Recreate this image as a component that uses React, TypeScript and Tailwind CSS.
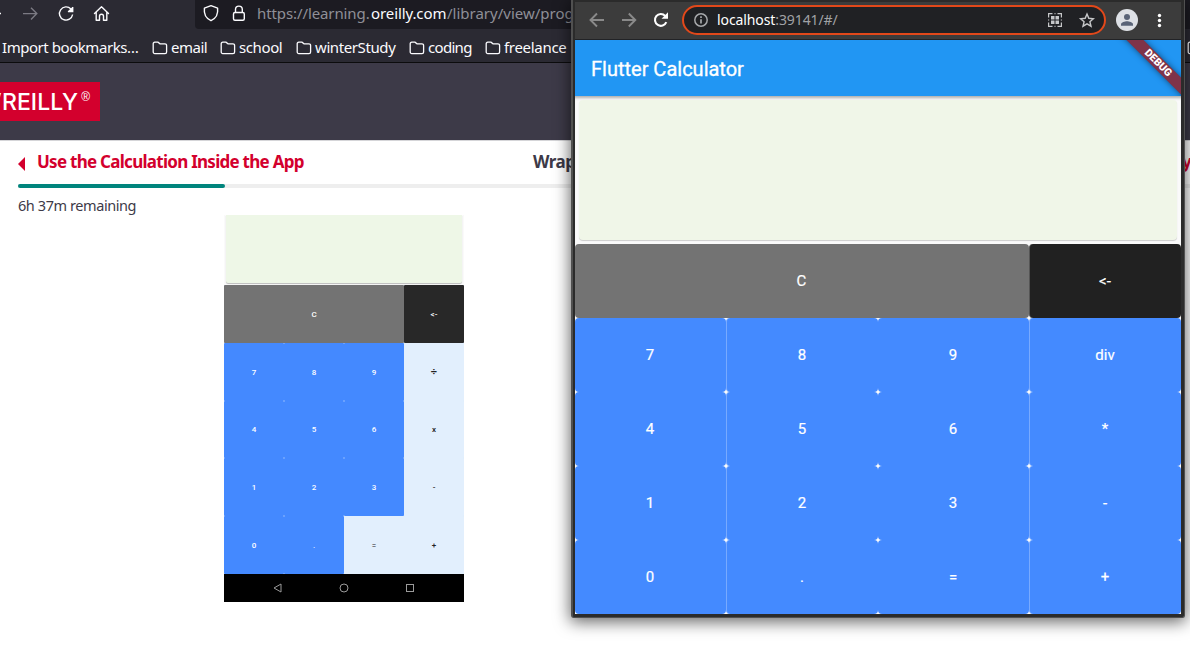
import React from "react";

type IconProps = { className?: string };

const Folder = ({ className = "" }: IconProps) => (
  <svg viewBox="0 0 16 14" className={`h-[14px] w-4 shrink-0 ${className}`} fill="none" stroke="#fbfbfe" strokeWidth="1.3">
    <path d="M1.2 3V11a1.6 1.6 0 0 0 1.6 1.6H13a1.6 1.6 0 0 0 1.6-1.6V4.4A1.6 1.6 0 0 0 13 2.8H8L6 1.2H2.8A1.6 1.6 0 0 0 1.2 3Z" />
  </svg>
);

const bookmarks = [
  { name: "email", box: "w-[68px]", text: "tracking-[-0.5px]" },
  { name: "school", box: "w-[76px]", text: "tracking-[-0.4px]" },
  { name: "winterStudy", box: "w-[113px]", text: "tracking-[-0.4px]" },
  { name: "coding", box: "w-[76px]", text: "tracking-[-0.7px]" },
  { name: "freelance", box: "w-[85px]", text: "tracking-[-0.3px]" },
];

function FirefoxChrome() {
  return (
    <div className="h-[63px] border-b border-[#0c0c0d] bg-[#2b2a33] text-[#fbfbfe]">
      <div className="flex h-[29px]">
        <svg width="195" height="29" viewBox="0 0 195 29" fill="none" stroke="#fbfbfe" strokeWidth="1.4" className="shrink-0">
          <path d="M0 13.5h1" />
          <g stroke="#7b7a83">
            <path d="M23 13.6h13.4M31 7.8l5.8 5.8-5.8 5.8" />
          </g>
          <path d="M72.6 14.5a6.6 6.6 0 1 1-1.7-5.5M72.7 7v4.6H68" />
          <path d="M67.5 11.6h5.2V6.8Z" fill="#fbfbfe" stroke="none" />
          <path d="M94.5 13.4l7-6.6 7 6.6M96.2 12v8.2h3.3v-4a2 2 0 0 1 4 0v4h3.3V12" strokeLinejoin="round" strokeLinecap="round" />
        </svg>
        <div className="flex flex-1 items-start rounded-bl bg-[#1c1b22]">
          <svg width="62" height="29" viewBox="195 0 62 29" fill="none" stroke="#fbfbfe" strokeWidth="1.4" className="shrink-0">
            <path d="M211 5.7l6.6 2.5c.7 6-1.5 10.300-6.6 12.500-5.100-2.200-7.300-6.500-6.600-12.500Z" strokeLinejoin="round" />
            <rect x="233.500" y="12.500" width="10.800" height="7.800" rx="1.500" />
            <path d="M235.500 12.500v-3a3.400 3.400 0 0 1 6.800 0v3" />
          </svg>
          <div className="mt-[3px] flex text-[15px] leading-[21px] whitespace-nowrap text-[#8f8f97]">
            <span className="w-[114px] tracking-[-0.1px]">https://learning.</span>
            <span className="w-[76px] tracking-[-0.1px] text-[#fbfbfe]">oreilly.com</span>
            <span>/library/view/programming</span>
          </div>
        </div>
      </div>
      <div className="flex h-[33px] pt-[8px] pl-[2px] text-[15px] leading-[21px] whitespace-nowrap">
        <span className="w-[150px] shrink-0 tracking-[-0.45px]">Import bookmarks…</span>
        {bookmarks.map((b) => (
          <div key={b.name} className={`flex shrink-0 ${b.box}`}>
            <Folder className="mt-1" />
            <span className={`ml-[3px] ${b.text}`}>{b.name}</span>
          </div>
        ))}
        <Folder className="mt-1 ml-[617px]" />
      </div>
    </div>
  );
}

function MiniKey({ label, tone = "blue", wide = false }: { label: string; tone?: string; wide?: boolean }) {
  const tones: Record<string, string> = {
    blue: "bg-[#4489ff] text-white",
    pale: "bg-[#e2effd] text-[#222]",
    gray: "bg-[#737373] text-white",
    black: "bg-[#282828] text-white",
  };
  return (
    <div className={`flex items-center justify-center rounded-[1px] pt-[2px] font-medium ${label === "÷" ? "text-[11px]" : "text-[8px]"} ${tones[tone]} ${wide ? "col-span-3" : ""}`}>
      {label}
    </div>
  );
}

function MiniCalculator() {
  const rows = [
    ["7", "8", "9", "÷"],
    ["4", "5", "6", "x"],
    ["1", "2", "3", "-"],
    ["0", ".", "=", "+"],
  ];
  return (
    <div className="ml-[224px] w-[240px] bg-[#fafafa] font-['Roboto',sans-serif]">
      <div className="h-[70px] px-[2px]">
        <div className="h-[68px] rounded-b-[2px] bg-[#eef7e7] shadow-[0_1px_1px_rgba(0,0,0,0.25)]" />
      </div>
      <div className="grid h-[289px] grid-cols-4 grid-rows-5 bg-[#dcebfc]">
        <MiniKey label="C" tone="gray" wide />
        <MiniKey label="<-" tone="black" />
        {rows.flat().map((k) => (
          <MiniKey key={k} label={k} tone={"÷x-=+".includes(k) ? "pale" : "blue"} />
        ))}
      </div>
      <svg width="240" height="28" viewBox="0 0 240 28" className="block bg-black" fill="none" stroke="#9b9b9b">
        <path d="M57 10v8l-7-4Z" />
        <circle cx="120" cy="14" r="4" />
        <rect x="182.500" y="10.500" width="7" height="7" />
      </svg>
    </div>
  );
}

function Reader() {
  return (
    <div>
      <header className="flex h-[77px] bg-[#3d3a48] pt-[19px]">
        <div className="flex h-[39px] w-[100px] justify-end overflow-hidden bg-[#d3002d] pr-[10px] text-white">
          <span className="mr-[3px] font-['Inter',sans-serif] text-[23px] leading-[40px] font-medium tracking-[0.050px] whitespace-nowrap">’REILLY</span>
          <span className="mt-[6px] font-['Liberation_Sans',sans-serif] text-[12px] leading-[18px]">®</span>
        </div>
      </header>
      <div className="h-[75px] border-t border-[#d5d5d8]">
        <div className="flex h-[43px] pt-[9px] pl-[18px] text-[17px] leading-[24px] font-bold whitespace-nowrap">
          <svg width="7" height="14" viewBox="0 0 7 14" className="mt-[7px] mr-3 shrink-0">
            <path d="M7 0v14L0 7Z" fill="#d3002d" />
          </svg>
          <span className="w-[496px] shrink-0 tracking-[-0.73px] text-[#d3002d]">Use the Calculation Inside the App</span>
          <span className="w-[600px] shrink-0 tracking-[-0.5px] text-[#3d3a48]">Wrap Up</span>
          <span className="ml-[49px] text-[#d3002d]">y</span>
        </div>
        <div className="ml-[18px] h-1 bg-[#eee]">
          <div className="h-1 w-[207px] rounded-full bg-[#00857d]" />
        </div>
        <div className="mt-[7px] ml-[18px] text-[14.5px] leading-[21px] tracking-[-0.42px] text-[#3d3a48]">6h 37m remaining</div>
      </div>
      <MiniCalculator />
    </div>
  );
}

function AddressBar() {
  return (
    <div className="flex h-[40px] border-t-2 border-b border-t-[#2b2b2b] border-b-[#222326] bg-[#3c3c3c] text-[#fff]">
      <svg width="107" height="37" viewBox="575 2 107 37" fill="none" strokeWidth="1.900" className="shrink-0">
        <path d="M604 20h-13M597 13.500L590.500 20l6.500 6.500M622 20h13M628.800 13.500l6.500 6.500-6.500 6.500" stroke="#8a8a8a" />
        <path d="M666.300 22.200a5.900 5.900 0 1 1-1.100-6.300" stroke="#fff" strokeWidth="2.100" />
        <path d="M661.500 18.700h6.500v-6.400Z" fill="#fff" />
      </svg>
      <div className="mt-[3px] flex h-[30px] w-[424px] shrink-0 items-center rounded-full border-2 border-[#e2481a] bg-[#202124] pl-2.5">
        <svg width="14" height="14" viewBox="0 0 14 14" fill="none" stroke="#a6a8ab" strokeWidth="1.500">
          <circle cx="7" cy="7" r="6.200" />
          <path d="M7 6.200v4.300M7 3.200v1.700" strokeWidth="1.700" />
        </svg>
        <span className="ml-[9px] text-[14px] leading-5 tracking-[-0.100px] text-[#a0a2a5]">
          <span className="text-white">localhost</span>:39141/#/
        </span>
        <svg width="48" height="16" viewBox="0 0 48 16" className="mr-[9px] ml-auto">
          <g fill="none" stroke="#c6c7c9" strokeWidth="1.200">
            <path d="M1.600 5.500V1.600H5.500M8.500 1.600h-1M10.500 1.600h3.900V5.500M14.400 7.500v1M14.400 10.500v3.900H10.500M8.500 14.400h-1M5.500 14.400H1.600V10.500M1.600 8.500v-1" />
          </g>
          <path d="M4 4h3.500v3.500H4zM8.500 4H12v3.500H8.500zM4 8.500h3.500V12H4zM8.500 8.500H12V12H8.500z" fill="#c6c7c9" />
          <path d="M40 2l1.800 4.300 4.600.4-3.500 3 1.100 4.500-4-2.400-4 2.400 1.100-4.500-3.500-3 4.600-.4Z" fill="none" stroke="#c6c7c9" strokeWidth="1.400" />
        </svg>
      </div>
      <svg width="75" height="37" viewBox="1106 2 75 37" className="shrink-0">
        <circle cx="1127" cy="20" r="11" fill="#dee1e6" />
        <circle cx="1127" cy="17" r="3" fill="#5a6478" />
        <path d="M1121 25.800v-1.600c0-2 4-3 6-3s6 1 6 3v1.600Z" fill="#5a6478" />
        <g fill="#fff">
          <circle cx="1159.500" cy="15.500" r="1.700" />
          <circle cx="1159.500" cy="20.500" r="1.700" />
          <circle cx="1159.500" cy="25.500" r="1.700" />
        </g>
      </svg>
    </div>
  );
}

function Key({ label, className = "bg-[#448aff]" }: { label: string; className?: string }) {
  return (
    <div className={`flex items-center justify-center rounded pr-px text-[15px] font-normal text-white [-webkit-text-stroke:0.2px_white] ${className}`}>
      {label}
    </div>
  );
}

const keys = ["7", "8", "9", "div", "4", "5", "6", "*", "1", "2", "3", "-", "0", ".", "=", "+"];

function CalculatorWindow() {
  return (
    <div className="absolute top-0 left-[571px] h-[618px] w-[614px] rounded-b-[3px] border-r border-b border-l-2 border-[#505050] bg-[#2b2b2b] shadow-[0_3px_16px_1px_rgba(0,0,0,0.600)]">
      <div className="ml-[2px] w-[606px]">
        <AddressBar />
        <div className="flex h-[574px] flex-col overflow-hidden bg-[#fafafa] font-['Roboto',sans-serif]">
          <div className="relative z-10 flex h-14 shrink-0 items-center overflow-hidden bg-[#2196f3] pt-[2px] pl-4 text-[20px] font-medium text-white">
            <span className="font-normal [-webkit-text-stroke:0.3px_white]">Flutter Calculator</span>
            <div className="absolute top-[17px] right-[-28px] flex h-[12px] w-[102px] rotate-45 items-center justify-center bg-[#7f3349] text-[10.5px] font-black text-white shadow-[0_0_6px_rgba(0,0,0,0.500)]">
              DEBUG
            </div>
          </div>
          <div className="h-[148px] shrink-0 p-1 shadow-[inset_0_4px_3px_-2px_rgba(0,0,0,0.300)]">
            <div className="h-[140px] rounded bg-[#f0f6e8] shadow-[0_1px_1px_rgba(0,0,0,0.180)]" />
          </div>
          <div className="grid h-[370px] grid-cols-[151px_152px_151px_152px] grid-rows-5">
            <Key label="C" className="col-span-3 bg-[#737373]" />
            <Key label="<-" className="border-l border-[#555] bg-[#212121]" />
            {keys.map((k, i) => (
              <Key key={k} label={k} className={i % 2 ? "border-l border-[#78aaff] bg-[#448aff]" : "bg-[#448aff]"} />
            ))}
          </div>
        </div>
      </div>
    </div>
  );
}

export default function App() {
  return (
    <div className="relative h-[651px] w-[1190px] overflow-hidden bg-white font-['Noto_Sans',sans-serif]">
      <FirefoxChrome />
      <Reader />
      <CalculatorWindow />
    </div>
  );
}
